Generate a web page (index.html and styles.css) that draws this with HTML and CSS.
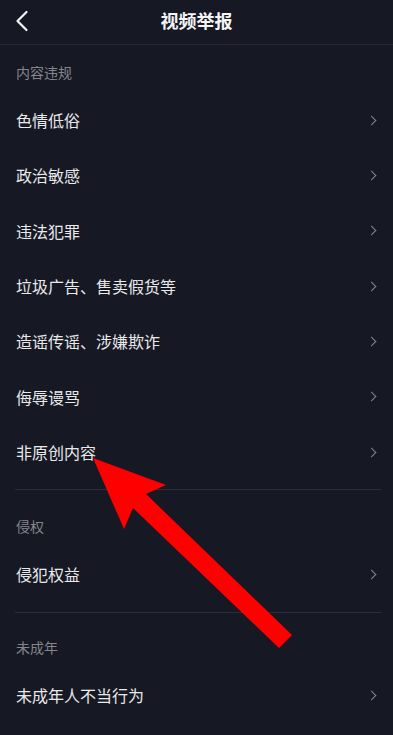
FILE: index.html
```html
<!DOCTYPE html>
<html lang="zh-CN">
<head>
<meta charset="utf-8">
<title>视频举报</title>
<link rel="stylesheet" href="styles.css">
</head>
<body>
<div class="page">
  <header class="nav">
    <span class="back">
      <svg width="14" height="22" viewBox="0 0 14 22"><path d="M11.5 2 L2.5 11 L11.5 20" fill="none" stroke="#f2f2f4" stroke-width="2.2" stroke-linecap="round" stroke-linejoin="round"/></svg>
    </span>
    <h1 class="title">视频举报</h1>
  </header>

  <section class="group first">
    <div class="label">内容违规</div>
    <div class="row"><span>色情低俗</span><i class="chev"></i></div>
    <div class="row"><span>政治敏感</span><i class="chev"></i></div>
    <div class="row"><span>违法犯罪</span><i class="chev"></i></div>
    <div class="row"><span>垃圾广告、售卖假货等</span><i class="chev"></i></div>
    <div class="row"><span>造谣传谣、涉嫌欺诈</span><i class="chev"></i></div>
    <div class="row"><span>侮辱谩骂</span><i class="chev"></i></div>
    <div class="row"><span>非原创内容</span><i class="chev"></i></div>
  </section>

  <section class="group">
    <div class="label">侵权</div>
    <div class="row"><span>侵犯权益</span><i class="chev"></i></div>
  </section>

  <section class="group last">
    <div class="label">未成年</div>
    <div class="row"><span>未成年人不当行为</span><i class="chev"></i></div>
  </section>

  <svg class="arrow" width="393" height="735" viewBox="0 0 393 735">
    <polygon points="93,458 166,485 146,494 292,635 279,648 133,508 124,529" fill="#ff0000"/>
  </svg>
</div>
</body>
</html>
```

FILE: styles.css
```css
html, body {
  margin: 0;
  padding: 0;
  background: #161823;
}
body {
  font-family: "Noto Sans CJK SC", "Noto Sans", sans-serif;
  color: #e9e9eb;
}
.page {
  position: relative;
  width: 393px;
  height: 735px;
  overflow: hidden;
  background: #161823;
}
.nav {
  height: 44px;
  border-bottom: 1px solid #262833;
  display: flex;
  align-items: center;
  justify-content: center;
  position: relative;
}
.back {
  position: absolute;
  left: 15px;
  top: 10px;
  width: 14px;
  height: 22px;
  display: flex;
}
.title {
  margin: 0;
  font-size: 18px;
  font-weight: 700;
  color: #f4f4f6;
  line-height: 24px;
  margin-top: -4px;
}
.group {
  margin: 0 12px 0 15px;
  border-bottom: 1px solid #2b2d37;
  padding-bottom: 9.5px;
}
.group.last {
  border-bottom: none;
}
.label {
  padding: 26px 0 0 1px;
  height: 20px;
  line-height: 20px;
  font-size: 14px;
  color: #85868d;
  margin-bottom: 10.5px;
}
.group.first .label {
  padding-top: 17px;
}
.group.last .label {
  padding-top: 24.5px;
}
.row {
  height: 55.33px;
  display: flex;
  align-items: center;
  justify-content: space-between;
  padding-left: 1px;
  font-size: 16px;
  color: #e9e9eb;
}
.chev {
  width: 6px;
  height: 6px;
  border-top: 1.5px solid #85868d;
  border-right: 1.5px solid #85868d;
  transform: rotate(45deg);
  margin-right: 6px;
}
.arrow {
  position: absolute;
  left: 0;
  top: 0;
  pointer-events: none;
}
```
